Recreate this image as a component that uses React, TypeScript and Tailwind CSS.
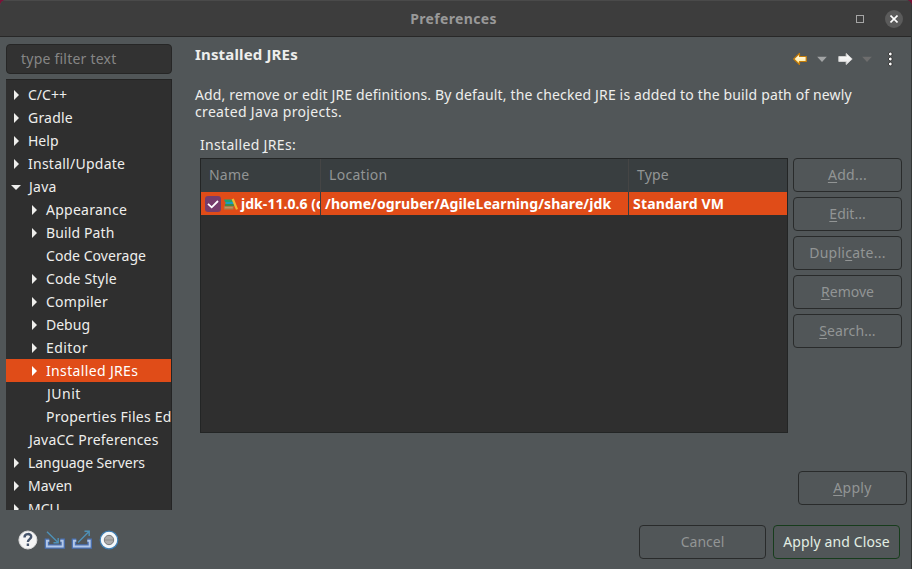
import React from "react";

type Node = { label: string; level: 0 | 1; state: "closed" | "open" | "leaf"; selected?: boolean; text: string };

const nodes: Node[] = [
  { label: "C/C++", level: 0, state: "closed", text: "" },
  { label: "Gradle", level: 0, state: "closed", text: "tracking-[0.2px]" },
  { label: "Help", level: 0, state: "closed", text: "" },
  { label: "Install/Update", level: 0, state: "closed", text: "tracking-[0.25px]" },
  { label: "Java", level: 0, state: "open", text: "pl-px tracking-[0.25px]" },
  { label: "Appearance", level: 1, state: "closed", text: "tracking-[0.25px]" },
  { label: "Build Path", level: 1, state: "closed", text: "tracking-[0.12px]" },
  { label: "Code Coverage", level: 1, state: "leaf", text: "tracking-[0.05px]" },
  { label: "Code Style", level: 1, state: "closed", text: "tracking-[0.2px]" },
  { label: "Compiler", level: 1, state: "closed", text: "tracking-[0.25px]" },
  { label: "Debug", level: 1, state: "closed", text: "" },
  { label: "Editor", level: 1, state: "closed", text: "tracking-[0.45px]" },
  { label: "Installed JREs", level: 1, state: "closed", selected: true, text: "tracking-[0.35px]" },
  { label: "JUnit", level: 1, state: "leaf", text: "pl-px tracking-[0.5px]" },
  { label: "Properties Files Ed", level: 1, state: "leaf", text: "tracking-[0.26px]" },
  { label: "JavaCC Preferences", level: 0, state: "leaf", text: "pl-px tracking-[0.22px]" },
  { label: "Language Servers", level: 0, state: "closed", text: "tracking-[-0.06px]" },
  { label: "Maven", level: 0, state: "closed", text: "" },
  { label: "MCU", level: 0, state: "closed", text: "" },
];

function TreeRow({ node }: { node: Node }) {
  return (
    <div
      className={`flex h-[23px] shrink-0 items-center whitespace-nowrap ${node.level ? "pl-[23px]" : "pl-[5px]"} ${
        node.selected ? "bg-[#e04c18] text-white" : "text-[#eeeeec]"
      }`}
    >
      <svg className="mr-[7px] size-[10px] shrink-0" viewBox="0 0 10 10" fill="currentColor">
        {node.state === "closed" && <path d="M3 0 8 5 3 10z" />}
        {node.state === "open" && <path d="M0 3h10L5 8z" />}
      </svg>
      <span className={node.text}>{node.label}</span>
    </div>
  );
}

function Key({ children }: { children: React.ReactNode }) {
  return <span className="underline decoration-1 underline-offset-2 [text-decoration-skip-ink:none]">{children}</span>;
}

function Button({ className, children }: { className: string; children: React.ReactNode }) {
  return (
    <button className={`flex h-[34px] shrink-0 items-center justify-center rounded-[4px] border pb-[2px] whitespace-nowrap ${className}`}>
      <span>{children}</span>
    </button>
  );
}

export default function App() {
  return (
    <div className="bg-[#7b1237]">
      <div className="flex h-[569px] w-[912px] flex-col overflow-hidden rounded-t-[6px] border-r border-[#343736] bg-[#515658] font-['Noto_Sans',sans-serif] text-[14px] leading-[17px] text-[#eeeeec]">
        <header className="flex h-[37px] shrink-0 items-center border-t border-b border-t-[#4a4a4a] border-b-[#282828] bg-[#3d3d3d] pr-2">
          <div className="w-[192px]" />
          <h1 className="flex-1 pl-[4px] text-center font-bold tracking-[0.35px] text-[#999999]">Preferences</h1>
          <div className="flex w-[192px] items-center justify-end gap-[21px]">
            <div className="size-[8px] border border-[#a5a5a5]" />
            <div className="flex size-[18px] items-center justify-center rounded-full bg-[#5b5b5b]">
              <svg className="size-[8px]" viewBox="0 0 8 8" stroke="#fff" strokeWidth="1.6">
                <path d="M.5.5l7 7M7.5.5l-7 7" />
              </svg>
            </div>
          </div>
        </header>

        <div className="flex h-[473px] shrink-0">
          <aside className="flex w-[172px] shrink-0 flex-col pt-[7px] pl-[6px]">
            <div className="flex h-[30px] shrink-0 items-center rounded-[4px] border border-[#262626] bg-[#323232] pb-[2px] pl-[14px] text-[#868686]">
              <span className="tracking-[0.22px]">type filter text</span>
            </div>
            <nav className="mt-[5px] flex h-[431px] flex-col overflow-hidden border-t border-r border-[#242424] bg-[#2f2f2f] pt-[3px]">
              {nodes.map((n) => (
                <TreeRow key={n.label} node={n} />
              ))}
            </nav>
          </aside>

          <main className="flex flex-1 flex-col pl-[23px]">
            <div className="flex h-[44px] items-center justify-between pr-[10px]">
              <h2 className="mb-[9px] text-[15px] font-bold tracking-[0.16px]">Installed JREs</h2>
              <svg className="h-[16px] w-[108px]" viewBox="0 0 108 16">
                <defs>
                  <linearGradient id="back" x2="0" y2="1"><stop stopColor="#fff" /><stop offset="1" stopColor="#ffe68a" /></linearGradient>
                  <linearGradient id="fwd" x2="0" y2="1"><stop stopColor="#fff" /><stop offset="1" stopColor="#e6e6e6" /></linearGradient>
                </defs>
                <path d="M.7 8 6.5 2.5v3h6.7v5H6.5v3z" fill="url(#back)" stroke="#c47c08" strokeWidth="1.2" strokeLinejoin="round" />
                <path d="M24.2 5.8h9.6L29 11z" fill="#a2a4a5" />
                <path d="M59.2 8 53.2 2.5v3h-7.4v5h7.4v3z" fill="url(#fwd)" stroke="#d0d0d0" strokeLinejoin="round" />
                <path d="M69.2 5.8h9.6L74 11z" fill="#6d6d6d" />
                <g fill="#fff" stroke="#2a2a2a" strokeWidth=".9">
                  <circle cx="97.3" cy="3" r="1.9" />
                  <circle cx="97.3" cy="8" r="1.9" />
                  <circle cx="97.3" cy="13" r="1.9" />
                </g>
              </svg>
            </div>
            <p className="mt-[5px] whitespace-nowrap">
              <span className="block tracking-[0.145px]">Add, remove or edit JRE definitions. By default, the checked JRE is added to the build path of newly</span>
              <span className="block tracking-[0.33px]">created Java projects.</span>
            </p>
            <div className="mt-[16px] pl-[5px] tracking-[0.32px]"><span>Installed <Key>J</Key>REs:</span></div>
            <div className="mt-[5px] flex gap-[5px] pl-[5px]">
              <section className="h-[275px] w-[588px] border border-[#232525] bg-[#2f2f2f]">
                <div className="grid h-[33px] grid-cols-[120px_308px_1fr] items-stretch bg-[#393e40] text-[#929595]">
                  <div className="flex items-center border-r border-[#454545] pb-[2px] pl-[8px] tracking-[0.2px]"><span>Name</span></div>
                  <div className="flex items-center border-r border-[#454545] pb-[2px] pl-[8px] tracking-[0.3px]"><span>Location</span></div>
                  <div className="flex items-center pb-[2px] pl-[8px] tracking-[0.2px]"><span>Type</span></div>
                </div>
                <div className="grid h-[23px] grid-cols-[120px_308px_1fr] bg-[#e04c18] font-bold whitespace-nowrap text-white">
                  <div className="flex items-center overflow-hidden border-r border-[#393e40] pl-[4px]">
                    <svg className="size-[16px] shrink-0" viewBox="0 0 16 16">
                      <rect width="16" height="16" rx="3" fill="#763d6c" />
                      <path d="M3 7.8 6.7 11.3 13 5" fill="none" stroke="#fff" strokeWidth="1.8" />
                    </svg>
                    <svg className="ml-[3px] h-[16px] w-[14px] shrink-0" viewBox="0 0 14 16">
                      <path d="M0 3.6h9v2.4H1z" fill="#22a06f" />
                      <path d="M1.5 6H10v2H1.5z" fill="#1b9cc0" />
                      <path d="M1 8h9v2H1z" fill="#3f8a4a" />
                      <path d="M0 10h9.5v3.6H0z" fill="#a87a4a" />
                      <path d="M.8 11.2h8v1h-8z" fill="#c79b6b" />
                      <path d="M7.6 3.2l2.2-.8L14 12.9l-2 .8z" fill="#f0b530" />
                    </svg>
                    <span className="ml-[3px] tracking-[0.05px]">jdk-11.0.6 (default)</span>
                  </div>
                  <div className="flex items-center border-r border-[#393e40] pl-[4px] tracking-[0.08px]"><span>/home/ogruber/AgileLearning/share/jdk</span></div>
                  <div className="flex items-center pl-[4px] tracking-[0.17px]"><span>Standard VM</span></div>
                </div>
              </section>
              <div className="flex w-[109px] flex-col gap-[5px] text-[#929595]">
                <Button className="border-[#292b2b] tracking-[0.3px]"><Key>A</Key>dd...</Button>
                <Button className="border-[#292b2b]"><Key>E</Key>dit...</Button>
                <Button className="border-[#292b2b] tracking-[0.25px]">Dupli<Key>c</Key>ate...</Button>
                <Button className="border-[#292b2b]"><Key>R</Key>emove</Button>
                <Button className="border-[#292b2b] tracking-[0.1px]"><Key>S</Key>earch...</Button>
              </div>
            </div>
            <div className="mt-auto mb-[5px] flex justify-end pr-[4px] text-[#929595]">
              <Button className="w-[109px] border-[#292b2b] tracking-[0.35px]"><Key>A</Key>pply</Button>
            </div>
          </main>
        </div>

        <footer className="flex flex-1 items-start justify-between pt-[15px] pr-[11px] pl-[18px]">
          <svg className="mt-[5px] h-[20px] w-[102px]" viewBox="0 0 102 20" fill="none">
            <circle cx="9.9" cy="10" r="9" fill="#f5f5f5" stroke="#d9d9d9" />
            <path d="M6.5 7.4c0-4.5 6.9-4.2 6.7-.5-.1 2.3-3.3 2.2-3.3 5.1M9.9 13.6v2.4" stroke="#46556c" strokeWidth="2.4" />
            <g stroke="#4a72b4" strokeWidth="4.4">
              <path d="M31.3 10.7h-2.4v5.8h15.8v-5.8h-2.4" />
              <path d="M58.3 10.7h-2.4v5.8h15.8v-5.8h-2.4" />
            </g>
            <g stroke="#b3c8e8" strokeWidth="1.9">
              <path d="M31.3 10.7h-2.4v5.8h15.8v-5.8h-2.4" />
              <path d="M58.3 10.7h-2.4v5.8h15.8v-5.8h-2.4" />
            </g>
            <g stroke="#4e91b7" strokeWidth="1.4">
              <path d="M29 1.8 40 12.5M40.2 8v4.7h-4.7" />
              <path d="M60 12.5 71 1.5M66.5 1.3h4.7V6" />
            </g>
            <circle cx="91" cy="10" r="8.8" fill="#f4f8fb" stroke="#3f7fb5" strokeWidth="1.2" />
            <circle cx="91" cy="10" r="4.7" fill="#aaa" stroke="#777" />
            <path d="M87 10h8" stroke="#888" />
          </svg>
          <div className="flex gap-[7px]">
            <Button className="w-[127px] border-[#292b2b] text-[#929595]">Cancel</Button>
            <Button className="w-[127px] border-[#173c1c] tracking-[0.12px] text-[#e2eee3]">Apply and Close</Button>
          </div>
        </footer>
      </div>
    </div>
  );
}
